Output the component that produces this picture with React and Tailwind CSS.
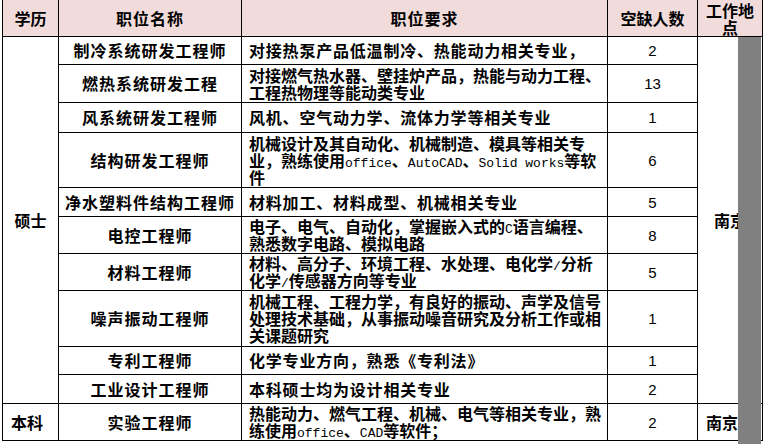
import React from "react";

const rows = [
  { name: "制冷系统研发工程师", req: ["对接热泵产品低温制冷、热能动力相关专业，"], num: "2", h: "h-[28px]", wide: true },
  { name: "燃热系统研发工程", req: ["对接燃气热水器、壁挂炉产品，热能与动力工程、", "工程热物理等能动类专业"], num: "13", h: "h-[38px]" },
  { name: "风系统研发工程师", req: ["风机、空气动力学、流体力学等相关专业"], num: "1", h: "h-[30px]", wide: true },
  {
    name: "结构研发工程师",
    req: [
      "机械设计及其自动化、机械制造、模具等相关专",
      <>业，熟练使用<M>office</M>、<M>AutoCAD</M>、<M>Solid works</M>等软</>,
      "件",
    ],
    num: "6",
    h: "h-[55px]",
  },
  { name: "净水塑料件结构工程师", req: ["材料加工、材料成型、机械相关专业"], num: "5", h: "h-[29px]", wide: true },
  {
    name: "电控工程师",
    req: [<>电子、电气、自动化，掌握嵌入式的<M>C</M>语言编程、</>, "熟悉数字电路、模拟电路"],
    num: "8",
    h: "h-[37px]",
  },
  {
    name: "材料工程师",
    req: [<>材料、高分子、环境工程、水处理、电化学<M>/</M>分析</>, <>化学<M>/</M>传感器方向等专业</>],
    num: "5",
    h: "h-[37px]",
  },
  {
    name: "噪声振动工程师",
    req: ["机械工程、工程力学，有良好的振动、声学及信号", "处理技术基础，从事振动噪音研究及分析工作或相", "关课题研究"],
    num: "1",
    h: "h-[56px]",
  },
  { name: "专利工程师", req: ["化学专业方向，熟悉《专利法》"], num: "1", h: "h-[28px]", wide: true },
  { name: "工业设计工程师", req: ["本科硕士均为设计相关专业"], num: "2", h: "h-[29px]", wide: true },
];

function M({ children }) {
  return (
    <span className="font-['Liberation_Mono',monospace] font-normal text-[13px] leading-none tracking-normal">
      {children}
    </span>
  );
}

const cell = "border border-black p-0 leading-[17px]";
const num = "border border-black p-0 leading-[17px] text-center font-['Liberation_Sans',sans-serif] font-normal text-[15px]";

function Req({ lines, wide }) {
  return (
    <div className={wide ? "pl-[7px] whitespace-nowrap tracking-[0.8px]" : "pl-[7px] whitespace-nowrap"}>
      {lines.map((l, i) => (
        <div key={i} className="h-[17px] leading-[17px]">
          {l}
        </div>
      ))}
    </div>
  );
}

export default function App() {
  return (
    <div className="relative h-[444px] w-[763px] overflow-hidden bg-white font-['Noto_Sans_CJK_SC',sans-serif] text-[16px] font-bold leading-[17px] text-black">
      <table className="ml-[2px] mt-[-1px] w-[760px] table-fixed border-collapse">
        <colgroup>
          <col className="w-[56px]" />
          <col className="w-[183px]" />
          <col className="w-[366px]" />
          <col className="w-[90px]" />
          <col className="w-[65px]" />
        </colgroup>
        <thead>
          <tr className="h-[36px] bg-[#f2dcdb]">
            <th className={`${cell} text-center`}>学历</th>
            <th className={`${cell} text-center tracking-[1px]`}>职位名称</th>
            <th className={`${cell} text-center tracking-[1px]`}>职位要求</th>
            <th className={`${cell} text-center`}>空缺人数</th>
            <th className={`${cell} pt-[2px] text-center align-top leading-[16px]`}>
              工作地
              <br />
              点
            </th>
          </tr>
        </thead>
        <tbody>
          {rows.map((r, i) => (
            <tr key={i} className={r.h}>
              {i === 0 && (
                <td rowSpan={10} className={`${cell} text-center`}>
                  硕士
                </td>
              )}
              <td className={`${cell} text-center tracking-[1px]`}>{r.name}</td>
              <td className={cell}>
                <Req lines={r.req} wide={r.wide} />
              </td>
              <td className={num}>{r.num}</td>
              {i === 0 && (
                <td rowSpan={10} className={`${cell} text-center`}>
                  南京
                </td>
              )}
            </tr>
          ))}
          <tr className="h-[37px]">
            <td className={`${cell} pl-[8px] text-left`}>本科</td>
            <td className={`${cell} text-center tracking-[1px]`}>实验工程师</td>
            <td className={cell}>
              <Req
                lines={[
                  "热能动力、燃气工程、机械、电气等相关专业，熟",
                  <>练使用<M>office</M>、<M>CAD</M>等软件；</>,
                ]}
              />
            </td>
            <td className={num}>2</td>
            <td className={`${cell} pl-[8px] text-left`}>南京</td>
          </tr>
        </tbody>
      </table>
      <div className="absolute left-[738px] top-[37px] bottom-0 w-[23px] bg-[#808080]" />
    </div>
  );
}
